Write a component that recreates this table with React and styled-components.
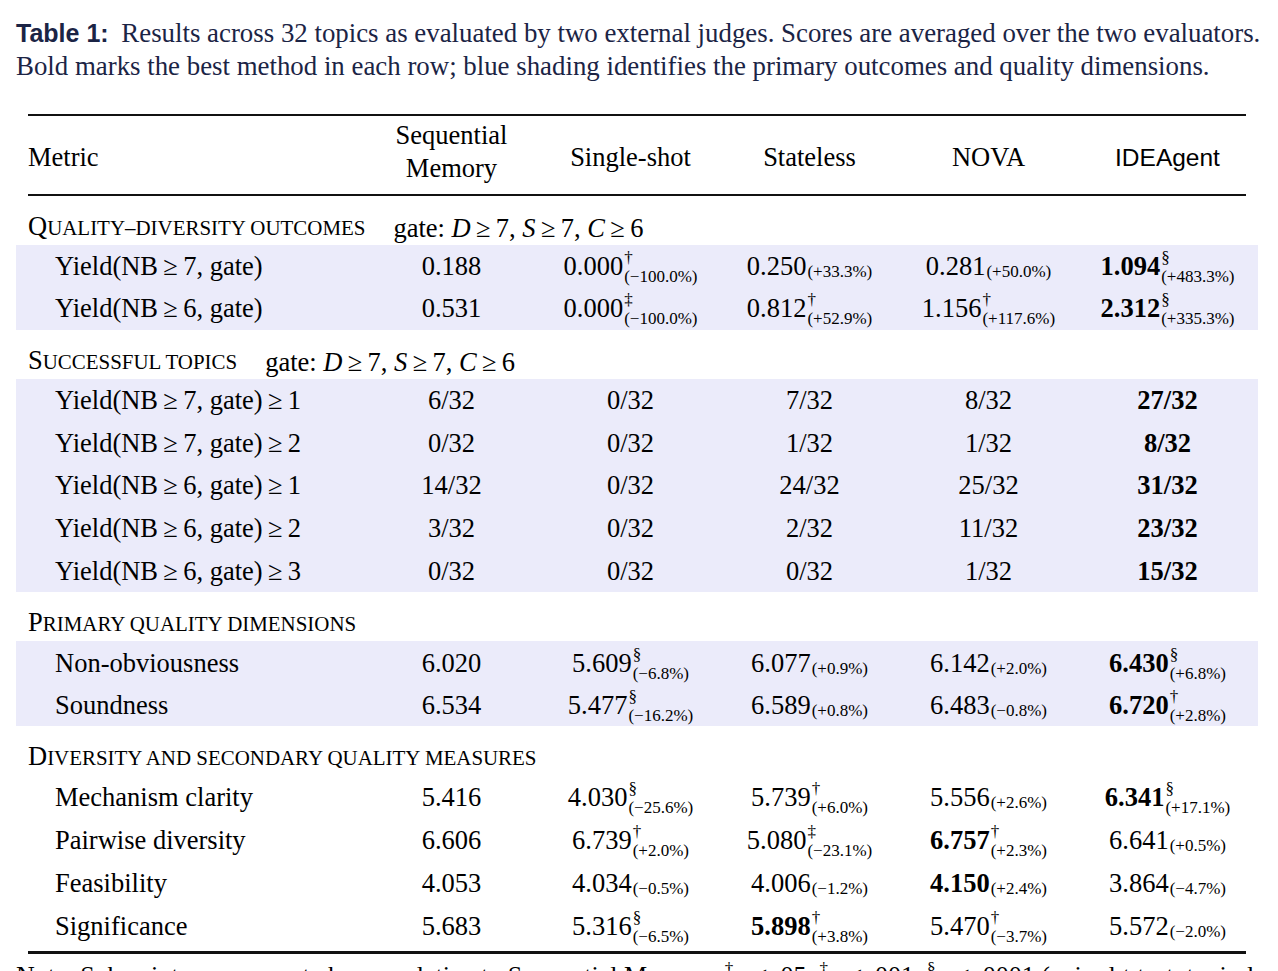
import React from 'react'
import styled, { createGlobalStyle } from 'styled-components'

const GlobalStyle = createGlobalStyle`
  html, body {
    margin: 0;
    padding: 0;
    background: #fff;
  }
  body {
    font-family: "Liberation Serif", "Times New Roman", serif;
    color: #000;
  }
`

const Page = styled.div`
  width: 1278px;
  height: 971px;
  overflow: hidden;
  box-sizing: border-box;
  padding: 17px 16px 0 16px;
`

const Caption = styled.div`
  width: 1246px;
  font-size: 26.85px;
  line-height: 33px;
  color: #1b2445;
`

const CaptionLine = styled.span`
  display: block;
  white-space: nowrap;
`

const CaptionLabel = styled.b`
  font-family: "Liberation Sans", Arial, sans-serif;
  font-size: 25px;
  font-weight: 700;
  margin-right: 6px;
`

const Table = styled.div`
  margin-top: 31px;
  width: 1242px;
`

const Rule = styled.div`
  margin: ${p => p.$top || 0}px 12px 0 12px;
  height: ${p => p.$w}px;
  background: #111;
`

const Row = styled.div`
  display: grid;
  grid-template-columns: 346px repeat(5, 179px);
  align-items: center;
  box-sizing: border-box;
  height: ${p => p.$h}px;
  padding-top: ${p => p.$pt || 0}px;
  font-size: 26.5px;
  line-height: 42px;
`

const Shade = styled.div`
  background: ${p => (p.$on ? '#ebebfa' : 'transparent')};
`

const HeadCell = styled.div`
  text-align: center;
  line-height: 33px;
  font-family: ${p => (p.$sans ? '"Liberation Sans", Arial, sans-serif' : 'inherit')};
  font-size: ${p => (p.$sans ? '24.5px' : 'inherit')};
  margin-bottom: ${p => (p.$lift ? '10px' : '0')};
`

const MetricHead = styled(HeadCell)`
  text-align: left;
  padding-left: 12px;
`

const SectionRow = styled.div`
  height: 49px;
  box-sizing: border-box;
  display: flex;
  align-items: flex-end;
  padding: 0 0 4px 12px;
  font-size: 26.5px;
  line-height: 26px;
  white-space: nowrap;
`

const Caps = styled.span`
  text-transform: uppercase;
  font-size: 0.79em;
`

const Gate = styled.span`
  margin-left: 28px;
`

const Label = styled.div`
  padding-left: 39px;
  white-space: nowrap;
`

const Cell = styled.div`
  text-align: center;
  white-space: nowrap;
`

const Num = styled.span`
  font-weight: ${p => (p.$bold ? 700 : 400)};
`

const Scripts = styled.span`
  display: inline-block;
  text-align: left;
  font-size: 17px;
  line-height: 19px;
  margin-left: 1px;
  vertical-align: ${p => (p.$sup ? '-7px' : '-2px')};
`

const Script = styled.span`
  display: block;
`

const Note = styled.div`
  margin-top: 5px;
  font-size: 26px;
  line-height: 33px;
  white-space: nowrap;
`

const Mark = styled.sup`
  font-size: 17px;
  line-height: 0;
`

const cols = [
  { key: 'seq', lines: ['Sequential', 'Memory'] },
  { key: 'single', lines: ['Single-shot'] },
  { key: 'stateless', lines: ['Stateless'] },
  { key: 'nova', lines: ['NOVA'] },
  { key: 'idea', lines: ['IDEAgent'], sans: true },
]

const T = '\u2009'
const y = (nb, extra) => `Yield(NB${T}≥${T}${nb}, gate)${extra ? `${T}≥${T}${extra}` : ''}`
const gate = (
  <Gate>
    gate: <i>D</i>{T}≥{T}7, <i>S</i>{T}≥{T}7, <i>C</i>{T}≥{T}6
  </Gate>
)

const v = (n, m, d, b) => ({ n, m, d, b })

const sections = [
  {
    title: ['Q', 'uality–diversity outcomes'],
    gate: true,
    shaded: true,
    h: 42.5,
    rows: [
      [y(7), [v('0.188'), v('0.000', '†', '(−100.0%)'), v('0.250', null, '(+33.3%)'), v('0.281', null, '(+50.0%)'), v('1.094', '§', '(+483.3%)', true)]],
      [y(6), [v('0.531'), v('0.000', '‡', '(−100.0%)'), v('0.812', '†', '(+52.9%)'), v('1.156', '†', '(+117.6%)'), v('2.312', '§', '(+335.3%)', true)]],
    ],
  },
  {
    title: ['S', 'uccessful topics'],
    gate: true,
    shaded: true,
    h: 42.8,
    rows: [
      [y(7, 1), [v('6/32'), v('0/32'), v('7/32'), v('8/32'), v('27/32', null, null, true)]],
      [y(7, 2), [v('0/32'), v('0/32'), v('1/32'), v('1/32'), v('8/32', null, null, true)]],
      [y(6, 1), [v('14/32'), v('0/32'), v('24/32'), v('25/32'), v('31/32', null, null, true)]],
      [y(6, 2), [v('3/32'), v('0/32'), v('2/32'), v('11/32'), v('23/32', null, null, true)]],
      [y(6, 3), [v('0/32'), v('0/32'), v('0/32'), v('1/32'), v('15/32', null, null, true)]],
    ],
  },
  {
    title: ['P', 'rimary quality dimensions'],
    shaded: true,
    h: 42.5,
    rows: [
      ['Non-obviousness', [v('6.020'), v('5.609', '§', '(−6.8%)'), v('6.077', null, '(+0.9%)'), v('6.142', null, '(+2.0%)'), v('6.430', '§', '(+6.8%)', true)]],
      ['Soundness', [v('6.534'), v('5.477', '§', '(−16.2%)'), v('6.589', null, '(+0.8%)'), v('6.483', null, '(−0.8%)'), v('6.720', '†', '(+2.8%)', true)]],
    ],
  },
  {
    title: ['D', 'iversity and secondary quality measures'],
    shaded: false,
    h: 43,
    rows: [
      ['Mechanism clarity', [v('5.416'), v('4.030', '§', '(−25.6%)'), v('5.739', '†', '(+6.0%)'), v('5.556', null, '(+2.6%)'), v('6.341', '§', '(+17.1%)', true)]],
      ['Pairwise diversity', [v('6.606'), v('6.739', '†', '(+2.0%)'), v('5.080', '‡', '(−23.1%)'), v('6.757', '†', '(+2.3%)', true), v('6.641', null, '(+0.5%)')]],
      ['Feasibility', [v('4.053'), v('4.034', null, '(−0.5%)'), v('4.006', null, '(−1.2%)'), v('4.150', null, '(+2.4%)', true), v('3.864', null, '(−4.7%)')]],
      ['Significance', [v('5.683'), v('5.316', '§', '(−6.5%)'), v('5.898', '†', '(+3.8%)', true), v('5.470', '†', '(−3.7%)'), v('5.572', null, '(−2.0%)')]],
    ],
  },
]

function Value({ n, m, d, b }) {
  return (
    <Cell>
      <Num $bold={b}>{n}</Num>
      {d && (
        <Scripts $sup={!!m}>
          {m && <Script>{m}</Script>}
          <Script>{d}</Script>
        </Scripts>
      )}
    </Cell>
  )
}

function Section({ section }) {
  const [first, rest] = section.title
  return (
    <>
      <SectionRow>
        <span>
          {first}
          <Caps>{rest}</Caps>
        </span>
        {section.gate && gate}
      </SectionRow>
      <Shade $on={section.shaded}>
        {section.rows.map(([label, vals]) => (
          <Row key={label} $h={section.h}>
            <Label>{label}</Label>
            {vals.map((val, i) => (
              <Value key={i} {...val} />
            ))}
          </Row>
        ))}
      </Shade>
    </>
  )
}

export default function App() {
  return (
    <Page>
      <GlobalStyle />
      <Caption>
        <CaptionLine>
          <CaptionLabel>Table 1:</CaptionLabel> Results across 32 topics as evaluated by two external judges. Scores are averaged over the two evaluators.
        </CaptionLine>
        <CaptionLine>
          Bold marks the best method in each row; blue shading identifies the primary outcomes and quality dimensions.
        </CaptionLine>
      </Caption>

      <Table>
        <Rule $w={2} />
        <Row $h={78} $pt={3}>
          <MetricHead>Metric</MetricHead>
          {cols.map(c => (
            <HeadCell key={c.key} $sans={c.sans} $lift={c.lines.length > 1}>
              {c.lines.map(l => (
                <div key={l}>{l}</div>
              ))}
            </HeadCell>
          ))}
        </Row>
        <Rule $w={1.5} />
        {sections.map(s => (
          <Section key={s.title.join('')} section={s} />
        ))}
        <Rule $w={2.5} $top={4} />
      </Table>
      <Note>
        Note: Subscripts are percent change relative to Sequential Memory. <Mark>†</Mark><i>p</i> &lt; .05, <Mark>‡</Mark><i>p</i> &lt; .001, <Mark>§</Mark><i>p</i> &lt; .0001 (paired <i>t</i>-test, topic-level).
      </Note>
    </Page>
  )
}
